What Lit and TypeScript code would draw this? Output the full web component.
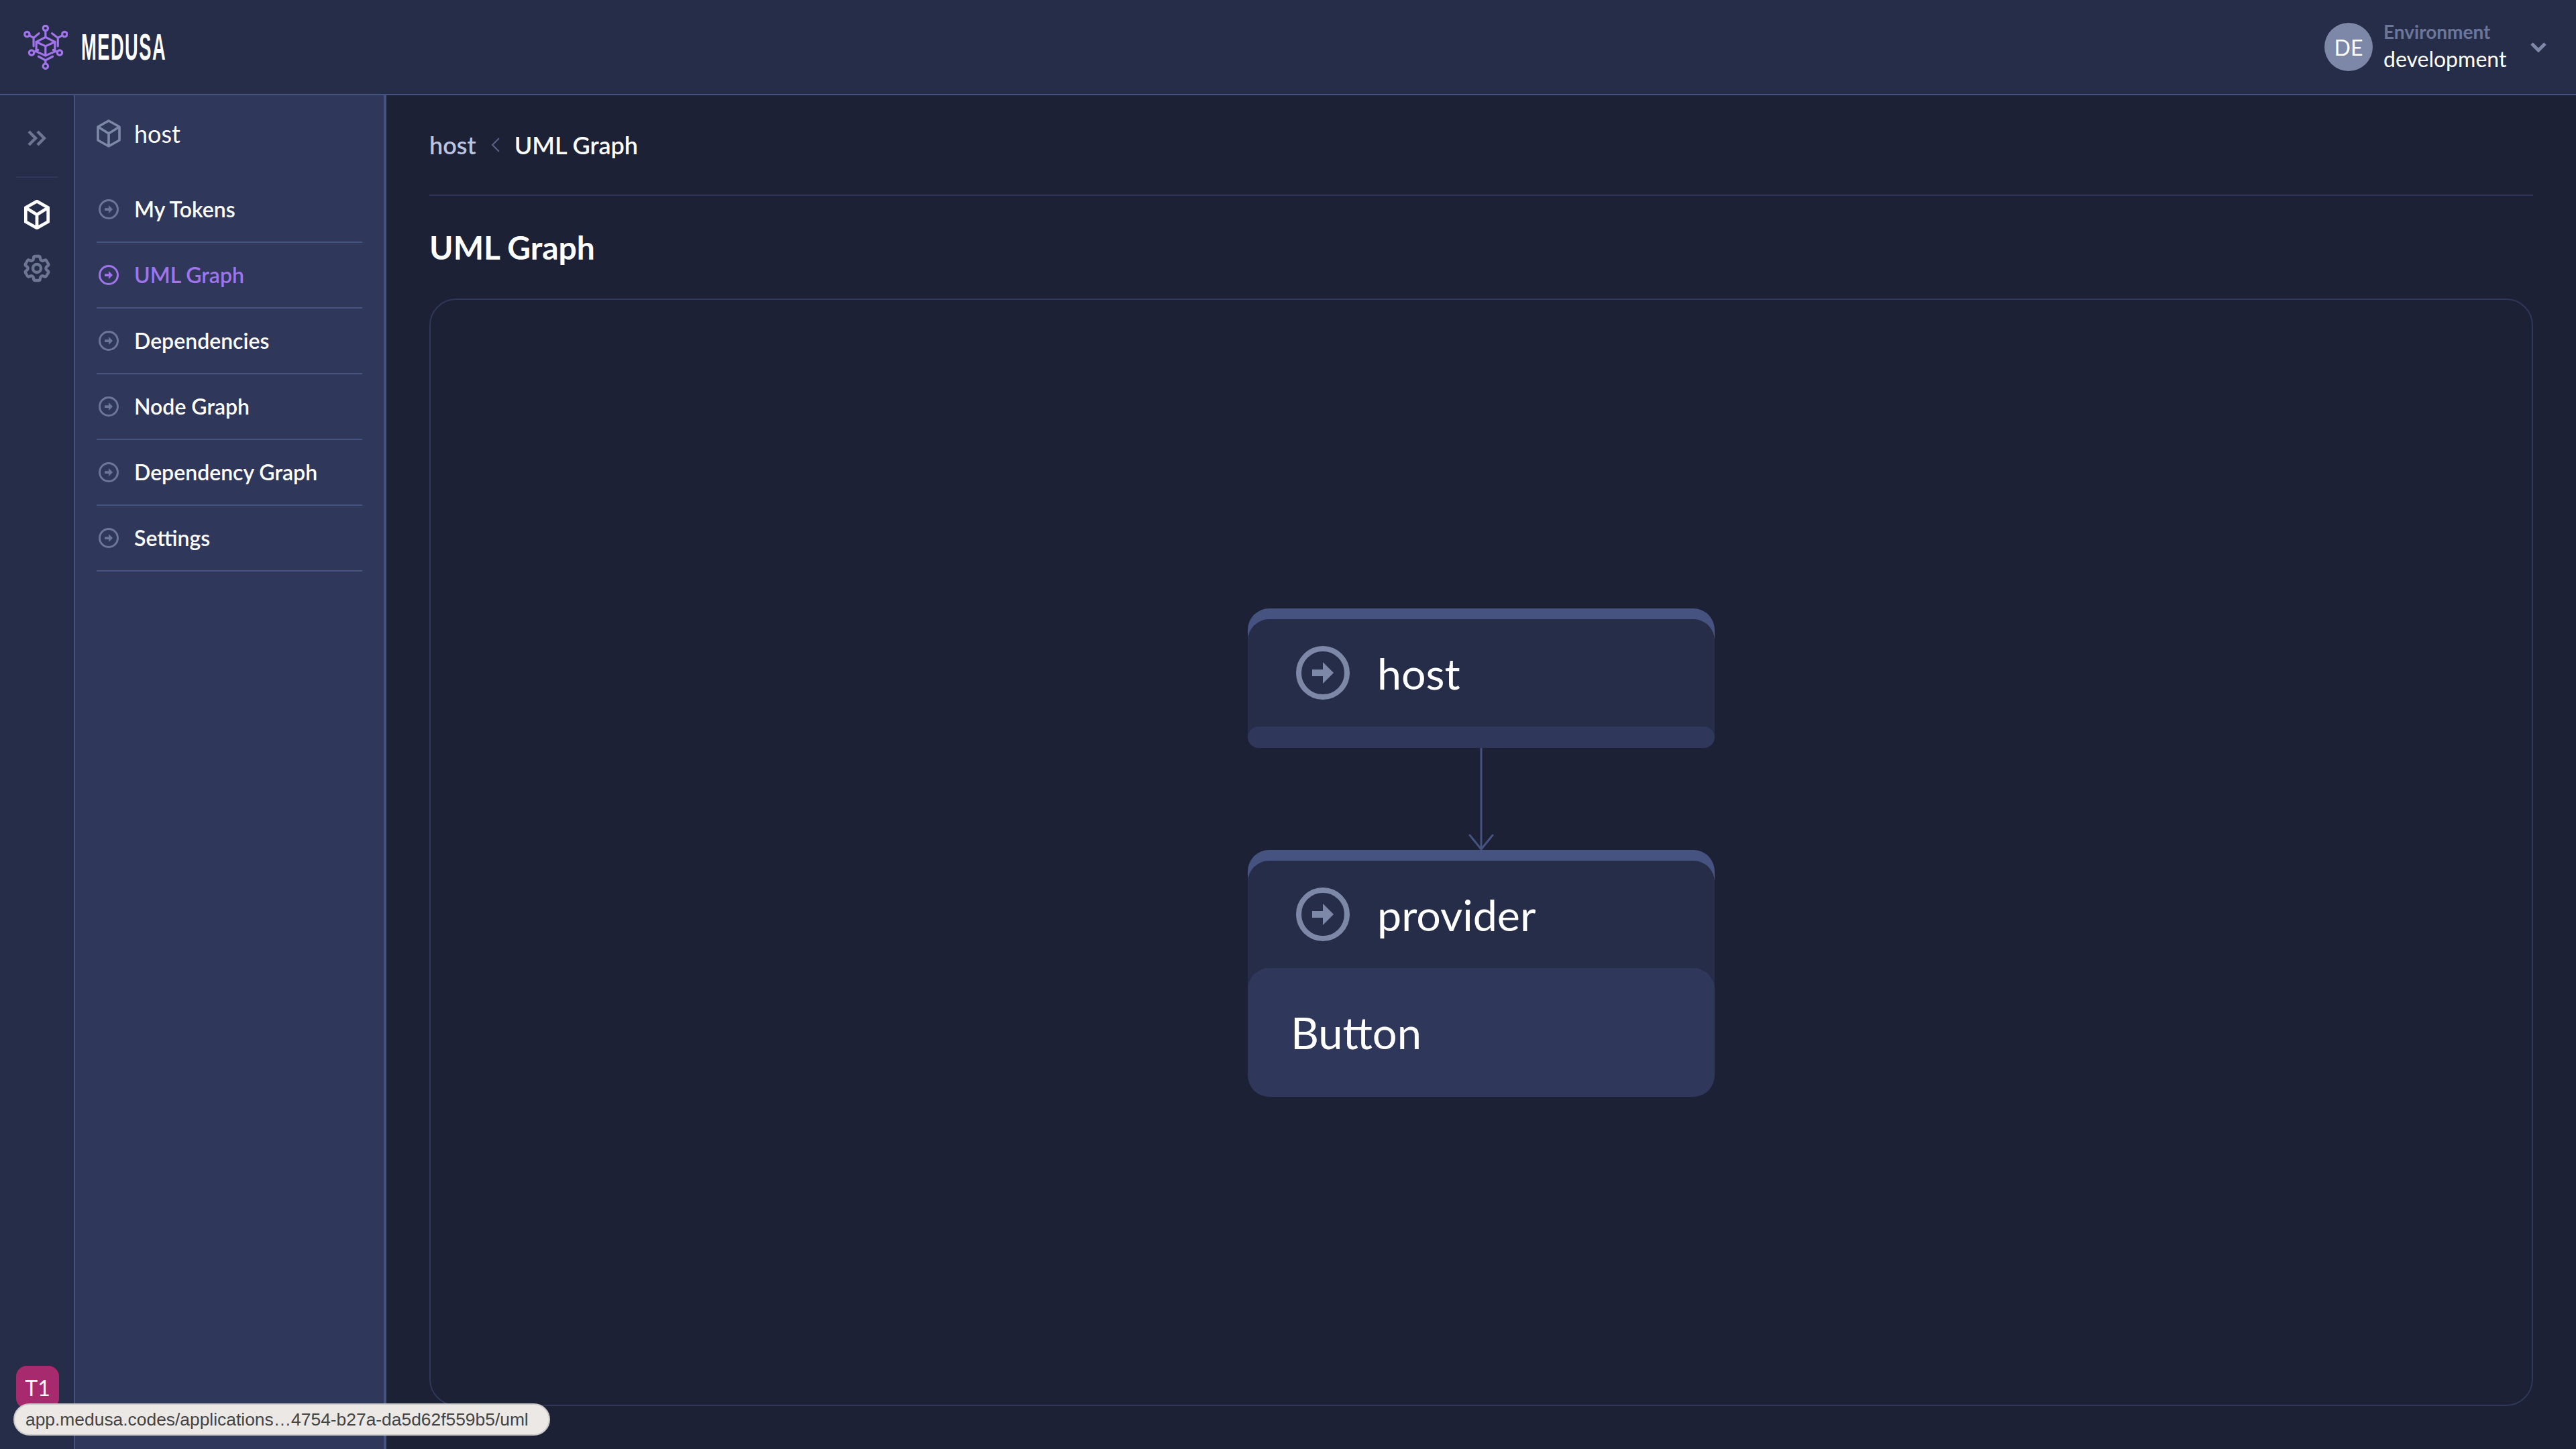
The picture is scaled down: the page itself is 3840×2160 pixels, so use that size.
import { LitElement, html, css, svg } from "lit";
import { customElement } from "lit/decorators.js";

const circleArrow = (cls: string) => html`<svg class=${cls} viewBox="0 0 80 80" aria-hidden="true">
  <circle cx="40" cy="40" r="36" fill="none" stroke="currentColor" stroke-width="8"></circle>
  <polygon points="24,35 40,35 40,24 56,40 40,56 40,45 24,45" fill="currentColor"></polygon>
</svg>`;

const cube = (cls: string, sw: number) => html`<svg class=${cls} viewBox="0 0 36 42" aria-hidden="true">
  <path d="M18 2 34 11V31L18 40 2 31V11Z M2 11 18 21 34 11 M18 21V40" fill="none" stroke="currentColor" stroke-width=${sw} stroke-linejoin="round"></path>
</svg>`;

const logoParts = svg`
  <g fill="none" stroke="#a274ec" stroke-width="9.5" stroke-linecap="round" stroke-linejoin="round">
    <circle cx="203" cy="125" r="11"></circle>
    <circle cx="121" cy="152" r="11"></circle>
    <circle cx="288" cy="152" r="11"></circle>
    <circle cx="141" cy="234" r="11"></circle>
    <circle cx="266" cy="234" r="11"></circle>
    <circle cx="203" cy="294" r="11"></circle>
    <path d="M203 137V165"></path>
    <path d="M203 165 245 186V229L203 247 162 229V186Z"></path>
    <path d="M162 186 203 205 245 186M203 205V247"></path>
    <path d="M133 158 150 168 174 148M150 168V205"></path>
    <path d="M276 158 258 168 232 148M258 168V205"></path>
    <path d="M152 231 170 222M255 231 237 222"></path>
    <path d="M172 251 203 268 235 251M203 268V282"></path>
  </g>`;

@customElement("app-root")
export class AppRoot extends LitElement {
  static styles = css`
    :host {
      display: block;
      width: 3840px;
      height: 2160px;
      overflow: hidden;
      position: relative;
      background: #1c2135;
      color: #fff;
      font-family: "Lato", "Liberation Sans", sans-serif;
    }
    .header {
      height: 140px;
      box-sizing: content-box;
      border-bottom: 2px solid #465280;
      background: #262d48;
      display: flex;
      align-items: center;
      padding: 0 44px 0 35px;
    }
    .logo-icon { width: 66px; height: 67px; display: block; }
    .logo-text {
      margin-left: 20px;
      font-family: "Liberation Sans", sans-serif;
      font-weight: 700;
      font-size: 55px;
      line-height: 60px;
      width: 126px;
      white-space: nowrap;
      letter-spacing: 3px;
      transform: scaleX(0.496);
      transform-origin: left center;
    }
    .env { margin-left: auto; display: flex; align-items: center; }
    .avatar {
      width: 72px;
      height: 72px;
      border-radius: 50%;
      background: #7d87a8;
      display: flex;
      align-items: center;
      justify-content: center;
      font-size: 32px;
    }
    .env-text { margin-left: 16px; display: flex; flex-direction: column; width: 182px; }
    .env-label { font-size: 28px; line-height: 36px; font-weight: 700; color: #6c769a; white-space: nowrap; }
    .env-value { font-size: 32px; line-height: 46px; white-space: nowrap; }
    .env-chevron { margin-left: 37px; width: 24px; height: 16px; color: #7d87a8; display: block; }
    .body { display: flex; height: 2018px; }
    .rail {
      width: 110px;
      border-right: 2px solid #465280;
      background: #262d48;
      display: flex;
      flex-direction: column;
      align-items: center;
      flex: none;
    }
    .rail-expand { width: 28px; height: 24px; margin-top: 52px; color: #6c7593; display: block; }
    .rail-rule { width: 62px; height: 2px; background: #2f385a; margin-top: 45px; }
    .rail-cube { width: 38px; height: 44px; margin-top: 33px; color: #fff; display: block; }
    .rail-gear { width: 48px; height: 48px; margin-top: 34px; color: #6c7593; display: block; }
    .badge {
      margin-top: auto;
      margin-bottom: 60px;
      margin-left: 2px;
      width: 64px;
      height: 64px;
      border-radius: 16px;
      background: #a82a6e;
      display: flex;
      align-items: center;
      justify-content: center;
      font-size: 32px;
    }
    .sidebar {
      width: 396px;
      padding: 0 32px;
      background: #2f385a;
      border-right: 4px solid #465280;
      flex: none;
    }
    .side-head { height: 122px; display: flex; align-items: flex-start; padding-top: 36px; box-sizing: border-box; }
    .side-cube { width: 36px; height: 42px; color: #7d87a8; flex: none; display: block; }
    .side-name { margin-left: 20px; font-size: 36px; line-height: 42px; }
    .item {
      height: 98px;
      box-sizing: border-box;
      border-bottom: 2px solid #465280;
      display: flex;
      align-items: center;
      font-size: 32px;
      font-weight: 600;
      white-space: nowrap;
    }
    .item-label { margin-bottom: 2px; }
    .item-icon { width: 30px; height: 30px; margin-left: 3px; margin-right: 23px; color: #6c769a; flex: none; display: block; }
    .item.active { color: #a274ec; }
    .item.active .item-icon { color: #a274ec; }
    .main { flex: 1; padding: 0 64px 64px; display: flex; flex-direction: column; min-width: 0; }
    .crumbs {
      height: 148px;
      border-bottom: 2px solid #2f385a;
      display: flex;
      align-items: center;
      font-size: 36px;
      flex: none;
    }
    .crumb-host { color: #bcc5e0; font-weight: 600; }
    .crumb-sep { width: 14px; height: 24px; margin: 0 21px 0 22px; color: #5a6488; display: block; }
    .crumb-current { font-weight: 600; }
    .title { height: 153px; margin: 0; font-size: 48px; font-weight: 700; display: flex; align-items: center; flex: none; }
    .canvas {
      flex: 1;
      border: 2px solid #2f385a;
      border-radius: 40px;
      display: flex;
      flex-direction: column;
      align-items: center;
      justify-content: center;
    }
    .node {
      width: 696px;
      background: linear-gradient(#465280 0 60px, transparent 60px);
      border-radius: 32px 32px 0 0;
      padding-top: 16px;
      display: flex;
      flex-direction: column;
    }
    .node-head {
      background: #262d48;
      border-radius: 32px 32px 0 0;
      box-sizing: border-box;
      padding: 40px 0 0 72px;
      display: flex;
      align-items: flex-start;
    }
    .head-short { height: 176px; }
    .head-tall { height: 192px; }
    .node-icon { width: 80px; height: 80px; color: #7d87a8; flex: none; display: block; }
    .node-name { margin-left: 41px; font-size: 64.5px; line-height: 80px; }
    .node-foot {
      position: relative;
      background: #2f385a;
      font-size: 65px;
      display: flex;
      align-items: center;
      box-sizing: border-box;
      padding-left: 64px;
    }
    .foot-empty { height: 32px; border-radius: 16px; margin-top: -16px; }
    .foot-full { height: 192px; border-radius: 32px; margin-top: -32px; }
    .edge { width: 40px; height: 152px; display: block; color: #465280; }
    .status {
      position: absolute;
      left: 20px;
      top: 2092px;
      width: 800px;
      height: 48px;
      box-sizing: border-box;
      border: 2px solid #cbc9c8;
      border-radius: 24px;
      background: #ebe8e6;
      color: #444;
      font-family: "Liberation Sans", sans-serif;
      font-size: 26.4px;
      line-height: 44px;
      padding-left: 16px;
      white-space: nowrap;
    }
  `;

  private items = ["My Tokens", "UML Graph", "Dependencies", "Node Graph", "Dependency Graph", "Settings"];

  render() {
    return html`
      <header class="header">
        <svg class="logo-icon" viewBox="105 110 197 200" aria-hidden="true">${logoParts}</svg>
        <span class="logo-text">MEDUSA</span>
        <div class="env">
          <div class="avatar">DE</div>
          <div class="env-text">
            <span class="env-label">Environment</span>
            <span class="env-value">development</span>
          </div>
          <svg class="env-chevron" viewBox="0 0 24 16" aria-hidden="true">
            <path d="M2 3 12 13 22 3" fill="none" stroke="currentColor" stroke-width="5"></path>
          </svg>
        </div>
      </header>
      <div class="body">
        <nav class="rail">
          <svg class="rail-expand" viewBox="0 0 28 24" aria-hidden="true">
            <path d="M2 2 12 12 2 22M15 2 25 12 15 22" fill="none" stroke="currentColor" stroke-width="4.4"></path>
          </svg>
          <div class="rail-rule"></div>
          ${cube("rail-cube", 4.6)}
          <svg class="rail-gear" viewBox="0 0 24 24" aria-hidden="true">
            <g fill="none" stroke="currentColor" stroke-width="2.2" stroke-linejoin="round">
              <path d="M9.594 3.94c.09-.542.56-.94 1.11-.94h2.593c.55 0 1.02.398 1.11.94l.213 1.281c.063.374.313.686.645.87.074.04.147.083.22.127.325.196.72.257 1.075.124l1.217-.456a1.125 1.125 0 011.37.49l1.296 2.247a1.125 1.125 0 01-.26 1.431l-1.003.827c-.293.241-.438.613-.43.992a7.723 7.723 0 010 .255c-.008.378.137.75.43.991l1.004.827c.424.35.534.955.26 1.43l-1.298 2.247a1.125 1.125 0 01-1.369.491l-1.217-.456c-.355-.133-.75-.072-1.076.124a6.47 6.47 0 01-.22.128c-.331.183-.581.495-.644.869l-.213 1.281c-.09.543-.56.94-1.11.94h-2.594c-.55 0-1.019-.398-1.11-.94l-.213-1.281c-.062-.374-.312-.686-.644-.87a6.52 6.52 0 01-.22-.127c-.325-.196-.72-.257-1.076-.124l-1.217.456a1.125 1.125 0 01-1.369-.49l-1.297-2.247a1.125 1.125 0 01.26-1.431l1.004-.827c.292-.24.437-.613.43-.991a6.932 6.932 0 010-.255c.007-.38-.138-.751-.43-.992l-1.004-.827a1.125 1.125 0 01-.26-1.43l1.297-2.247a1.125 1.125 0 011.37-.491l1.216.456c.356.133.751.072 1.076-.124.072-.044.146-.086.22-.128.332-.183.582-.495.644-.869l.214-1.28z"></path>
              <circle cx="12" cy="12" r="3"></circle>
            </g>
          </svg>
          <div class="badge">T1</div>
        </nav>
        <aside class="sidebar">
          <div class="side-head">${cube("side-cube", 3.6)}<span class="side-name">host</span></div>
          ${this.items.map(
            (t) => html`<div class="item ${t === "UML Graph" ? "active" : ""}">${circleArrow("item-icon")}<span class="item-label">${t}</span></div>`
          )}
        </aside>
        <main class="main">
          <div class="crumbs">
            <span class="crumb-host">host</span>
            <svg class="crumb-sep" viewBox="0 0 14 24" aria-hidden="true">
              <path d="M12 2 2 12 12 22" fill="none" stroke="currentColor" stroke-width="2"></path>
            </svg>
            <span class="crumb-current">UML Graph</span>
          </div>
          <h1 class="title">UML Graph</h1>
          <section class="canvas">
            <div class="node">
              <div class="node-head head-short">${circleArrow("node-icon")}<span class="node-name">host</span></div>
              <div class="node-foot foot-empty"></div>
            </div>
            <svg class="edge" viewBox="0 0 40 152" aria-hidden="true">
              <path d="M20 0V150M3 130 20 151 37 130" fill="none" stroke="currentColor" stroke-width="3" stroke-linecap="round"></path>
            </svg>
            <div class="node">
              <div class="node-head head-tall">${circleArrow("node-icon")}<span class="node-name">provider</span></div>
              <div class="node-foot foot-full">Button</div>
            </div>
          </section>
        </main>
      </div>
      <div class="status">app.medusa.codes/applications…4754-b27a-da5d62f559b5/uml</div>
    `;
  }
}
